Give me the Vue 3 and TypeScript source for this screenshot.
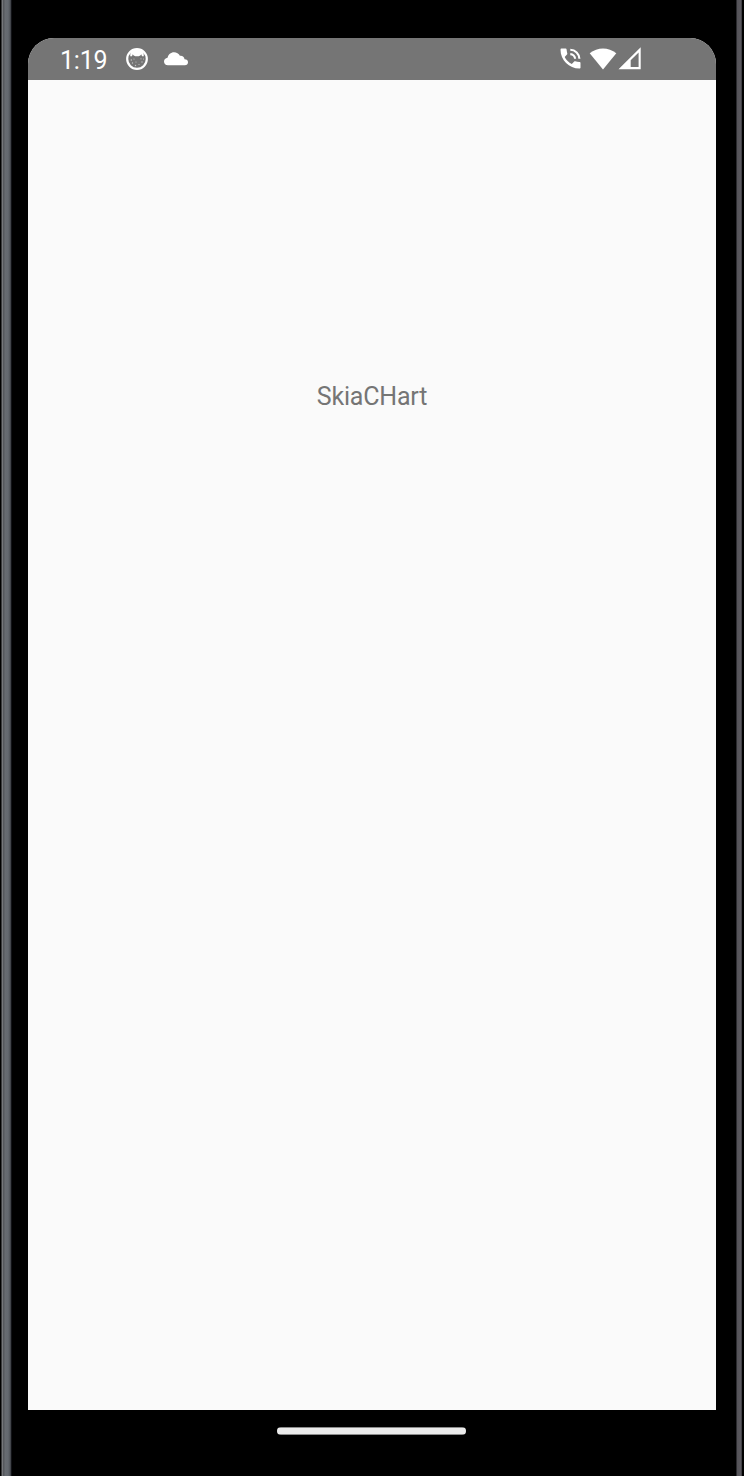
<script setup lang="ts">
const time: string = '1:19'
const label: string = 'SkiaCHart'
</script>

<template>
  <div class="device">
    <div class="rail left"></div>
    <div class="body">
      <div class="screen">
        <header class="status">
          <span class="time">{{ time }}</span>
          <svg class="face" width="24" height="24" viewBox="0 0 24 24">
            <circle cx="12" cy="12" r="9.8" fill="none" stroke="#fff" stroke-width="2.2" />
            <path d="M5.5 4.6C9 1.6 15 1.6 18.5 4.6L18.8 9.2 17 9.2 16.3 7.3 15.3 8.4 Q12 10.2 8.7 8.4L7.7 7.3 7 9.2 5.2 9.2Z" fill="#fff" />
            <g fill="#c4c4c4">
              <circle cx="6.3" cy="13" r=".7" /><circle cx="9" cy="12" r=".6" />
              <circle cx="7.5" cy="16" r=".7" /><circle cx="11" cy="15" r=".6" />
              <circle cx="10.5" cy="18.5" r=".7" /><circle cx="14" cy="17.5" r=".6" />
              <circle cx="17" cy="15" r=".7" /><circle cx="16" cy="11.8" r=".6" />
              <circle cx="18.5" cy="12" r=".6" />
            </g>
          </svg>
          <svg class="cloud" width="26" height="16" viewBox="0 0 26 16">
            <path d="M5 14.2C2.6 14.2 1 12.7 1 10.5 1 8.5 2.5 7 4.5 6.8 5.3 3.4 7.8 1.2 11 1.2 13.5 1.2 15.8 2.6 16.9 4.8 19.4 4.4 21.3 6 21.5 8.2 23.8 8.2 25 9.4 25 11.2 25 13 23.7 14.2 21.8 14.2Z" fill="#fff" />
          </svg>
          <div class="signals">
            <svg class="phone" width="22" height="22" viewBox="0 0 22 22">
              <path d="M1.4.6H5.6C6.2.6 6.5.9 6.6 1.5 6.7 2.9 7 4.2 7.3 5.4 7.4 5.8 7.3 6.2 7 6.5L4.7 9.1C6.2 12.1 8.7 14.6 11.8 16.1L14.2 13.6C14.5 13.3 14.9 13.2 15.3 13.3 16.5 13.7 17.9 13.9 19.4 14 20.1 14 20.5 14.4 20.5 15V19.5C20.5 20.2 20.1 20.6 19.4 20.6 9.1 20.4.5 12 .5 1.7.5 1 .8.6 1.4.6Z" fill="#fff" />
              <path d="M10.3 1.8A9.2 9.2 0 0 1 19.4 10.8M10.3 6.1A5 5 0 0 1 15.1 10.8" fill="none" stroke="#fff" stroke-width="2.1" />
            </svg>
            <svg class="wifi" width="28" height="22" viewBox="0 0 28 22">
              <path d="M.7 5.3C8.5-1.2 19.5-1.2 27.3 5.3L14 21.5Z" fill="#fff" />
            </svg>
            <svg class="cell" width="23" height="23" viewBox="0 0 23 23">
              <path d="M.5 22.3 22.7.2V22.3ZM12.7 20.1H20.6V5.4L12.7 13.3Z" fill="#fff" fill-rule="evenodd" />
            </svg>
          </div>
        </header>
        <main class="content">
          <span class="label">{{ label }}</span>
        </main>
      </div>
      <footer class="nav"><div class="handle"></div></footer>
    </div>
    <div class="rail right"></div>
  </div>
</template>

<style>
body { margin: 0; background: #000; }
</style>

<style scoped>
.device {
  box-sizing: border-box;
  display: flex;
  width: 744px;
  height: 1476px;
  padding: 0 2px 0 1px;
  background: #000;
  font-family: Roboto, sans-serif;
  overflow: hidden;
}
.rail { flex: none; }
.left {
  width: 11px;
  background: linear-gradient(90deg, #393a3c 0 1px, #75777b 1px 2px, #55585d 2px 3px, #676b71 4px, #646970 7px, #50545a 9px, #34363b 10px, #111216 10px 11px);
}
.right {
  width: 6px;
  background: linear-gradient(90deg, #2b2b2f 0 1px, #545358 1px, #5b595f 5px, #414045 5px 6px);
}
.body {
  flex: 1;
  display: flex;
  flex-direction: column;
  padding: 38px 20px 0 16px;
}
.screen {
  height: 1372px;
  border-radius: 26px 26px 0 0;
  overflow: hidden;
  background: #fafafa;
}
.status {
  display: flex;
  align-items: flex-start;
  height: 42px;
  background: #757575;
  color: #fff;
}
.time {
  width: 65px;
  padding-left: 32px;
  font-size: 25px;
  letter-spacing: -.2px;
  line-height: 46px;
}
.face { margin-top: 9px; }
.cloud { margin: 13px 0 0 14px; }
.signals {
  display: flex;
  margin-left: 371px;
}
.phone { margin-top: 10px; }
.wifi { margin: 10px 0 0 7px; }
.cell { margin: 9px 0 0 1px; }
.content {
  display: flex;
  justify-content: center;
  padding-top: 301px;
}
.label {
  color: #757575;
  font-size: 25px;
  letter-spacing: -.2px;
  line-height: 32px;
}
.nav {
  display: flex;
  justify-content: center;
  padding: 17px 1.5px 0 0;
}
.handle {
  width: 189px;
  height: 8px;
  border-radius: 4px;
  background: linear-gradient(#8c8c8c 0 1px, #ebebeb 1px 7px, #8c8c8c 7px);
}
</style>
